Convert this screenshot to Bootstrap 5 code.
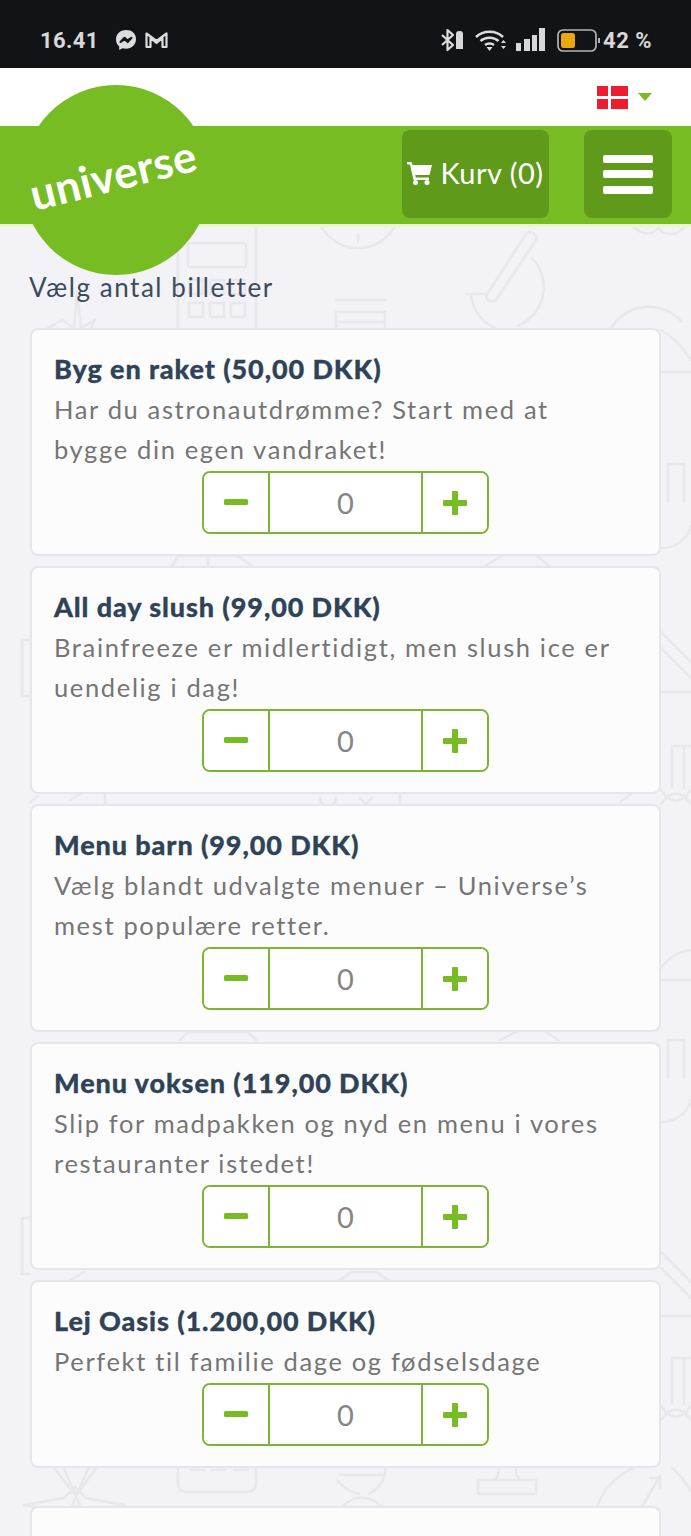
<!DOCTYPE html>
<html lang="da">
<head>
<meta charset="utf-8">
<title>Universe</title>
<link rel="stylesheet" href="https://cdn.jsdelivr.net/npm/bootstrap@5.3.0/dist/css/bootstrap.min.css">
<style>
html,body{margin:0;height:1536px;overflow:hidden}
body{background:#f2f2f7;font-family:Lato,"Noto Sans",sans-serif;color:#757575;position:relative}
.pattern{position:absolute;left:0;top:0;width:691px;height:1536px;z-index:0;fill:none;stroke:#e7e7ec;stroke-width:2.5;stroke-linejoin:round;stroke-linecap:round}
.statusbar{height:68px;background:#121316;color:#d8d8d8;font-family:Roboto,sans-serif;font-weight:700;font-size:22px;padding:12px 39px 0 40px;position:relative;z-index:1}
.clock{width:58px;margin-right:17px;letter-spacing:.4px}
.ic-wifi,.ic-signal{margin-left:8px}
.ic-batt{margin-left:12px}
.pct{margin-left:3px;letter-spacing:.5px}
.langbar{height:58px;background:#fff;padding-right:39px;position:relative;z-index:1}
.flag{width:31px;height:23px;margin-right:10px;display:block}
.caret-down{width:0;height:0;border-left:7.5px solid transparent;border-right:7.5px solid transparent;border-top:8px solid #78bc23}
.greenbar{height:98px;background:#78bc23;border-bottom:0;padding:4px 19px 6px 0;box-shadow:0 3px 0 #e9f8d2;position:relative;z-index:1}
.dark-btn{background:#5f9a1b;border:0;border-radius:8px;color:#fff;height:88px;padding:0}
.dark-btn:hover{background:#5f9a1b;color:#fff}
.cart-btn{width:147px;font-size:29px;margin-right:35px;letter-spacing:.5px;font-family:Lato,sans-serif;padding-bottom:2px}
.menu-btn{width:88px;gap:7.5px}
.menu-btn i{display:block;width:50px;height:8px;border-radius:2px;background:#fff}
.logo-disc{position:absolute;left:22px;top:85px;width:188px;height:190px;border-radius:50%;background:#78bc23;z-index:2}
.logo-word{position:absolute;left:1px;top:59px;width:180px;text-align:center;color:#fff;font-weight:700;font-size:44px;line-height:60px;letter-spacing:.5px;transform:rotate(-14deg)}
.page-main{position:relative;z-index:1;padding:46px 30px 0}
.lead-text{font-size:26px;line-height:34px;color:#3b4b5e;letter-spacing:1.55px;margin:0 0 24px -1px}
.ticket{border:2px solid #e6e6e8;border-radius:8px;background:#fcfcfd;margin-bottom:10px}
.ticket .card-body{padding:19px 22px 20px}
.ticket-title{font-size:27px;line-height:40px;font-weight:900;color:#2f4358;margin:0;letter-spacing:.9px;-webkit-text-stroke:.3px #2f4358}
.ticket-text{font-size:25.5px;line-height:40px;margin:0 0 2px;padding-right:12px;letter-spacing:1.65px;color:#757575}
.stepper{width:287px;height:63px;border:2px solid #7ab535;border-radius:8px;background:#fff;margin:0 auto;flex-wrap:nowrap;overflow:hidden}
.stepper>*{margin-left:0!important}
.stepper .step-btn{padding:0;border:0;border-radius:0;background:#fff;display:flex;align-items:center;justify-content:center;flex:none}
.stepper .form-control{border:0;border-left:2px solid #7ab535;border-right:2px solid #7ab535;border-radius:0;text-align:center;font-size:29px;color:#858585;padding:0;font-family:Lato,sans-serif;box-shadow:none}
.stepper .step-minus{width:64px}
.stepper .step-plus{width:64px}
.gap-last{margin-bottom:38px}
.ticket-empty{height:60px}
</style>
</head>
<body>
<svg class="pattern" viewBox="0 0 691 1536" aria-hidden="true">
  <!-- top row -->
  <rect x="178" y="214" width="78" height="140" rx="6"/>
  <rect x="188" y="243" width="58" height="24" rx="2"/>
  <path d="M189 280h14v14h-14zM210 280h14v14h-14zM231 280h14v14h-14zM189 303h14v14h-14zM210 303h14v14h-14zM231 303h14v14h-14z"/>
  <path d="M320 224a42 42 0 0 0 76 0M358 242v-8"/>
  <path d="M486 296l40-62a6 6 0 0 1 10 6l-40 60a6 6 0 0 1-10-4zM532 258a42 42 0 0 1-14 68M466 294h20M471 296a42 42 0 0 0 42 36"/>
  <path d="M336 312v18M385 312v18M336 312h49M336 322h49M336 300h49"/>
  <path d="M48 328l14-8 12 8 3-36 4 36 14-8-6 12"/>
  <path d="M610 330a44 44 0 0 1 72-8"/>
  <path d="M632 224c8 12 20 12 26 4 6 8 18 8 26 0"/>
  <!-- right edge -->
  <path d="M661 330c12 8 20 14 30 30M661 372h30"/>
  <path d="M668 502v-38h16v38M661 548c14 0 26-8 30-22"/>
  <path d="M661 632l30 30M661 648l30 30M661 692h30"/>
  <path d="M672 788v-42M684 788v-42M672 746h19M661 790c10 14 20 14 30 0M661 804c10-14 20-14 30 0"/>
  <path d="M661 968a44 44 0 0 1 30-18M661 980h30"/>
  <path d="M668 1078v-38h16v38M661 1122c14 0 26-8 30-22"/>
  <path d="M661 1252l30 30M661 1268l30 30M661 1316h30"/>
  <path d="M672 1404v-46M684 1404v-46M672 1358h19M661 1406c10 14 20 14 30 0M661 1420c10-14 20-14 30 0"/>
  <!-- left edge -->
  <path d="M30 640h-8v56h8M30 1218h-8v56h8"/>
  <!-- between cards -->
  <path d="M172 566l6-10h60l14 10M208 560v6M485 566l20-12h30l14 12"/>
  <path d="M30 802l8-6M70 800l14-8M105 804v-10M320 798a8 8 0 0 0 16 0M360 798l6 6 6-6M400 792v12M620 802l14-10"/>
  <path d="M180 1040l8-8h60l8 8M500 1040l20-10h24l14 10M70 1280l14-8M340 1280l12-8h24l12 8"/>
  <!-- bottom row -->
  <path d="M178 1460v24a8 8 0 0 0 8 8h62a8 8 0 0 0 8-8v-24M190 1470h14M212 1470h14M234 1470h14"/>
  <path d="M48 1460l28 36 26-36M24 1505l40-7 11-11 11 11 38 7-38 7-8 10-6-6-6 6-8-10zM60 1460l22 50M92 1460l-22 50"/>
  <path d="M337 1460a46 46 0 0 0 48 0M337 1480a40 30 0 0 0 22 14M385 1468a40 30 0 0 1-16 26M340 1510a26 26 0 0 1 44 0M340 1475h42"/>
  <path d="M478 1480v14h58v-14zM495 1480c4-4 4-8 4-12M520 1480c-4-4-4-8-4-12"/>
  <path d="M596 1510a66 66 0 0 1 38-42M672 1468a70 70 0 0 1 19 24M640 1510l20-34M650 1478h10v10"/>
</svg>

<header class="statusbar d-flex align-items-center">
  <span class="clock">16.41</span>
  <svg width="22" height="22" viewBox="0 0 22 22" class="me-2"><path fill="#dcdcdc" d="M11 1C5.2 1 1 5.100 1 10.500c0 2.900 1.200 5.300 3.200 7v3.500l3.300-1.800c1.100.3 2.300.5 3.500.5 5.800 0 10-4.100 10-9.700S16.800 1 11 1z"/><path fill="none" stroke="#121316" stroke-width="2" stroke-linejoin="round" d="M5.500 13l4-4.200 2.800 2.500 4.200-2.500-3.800 4.300-2.900-2.600z"/></svg>
  <svg width="23" height="18" viewBox="0 0 23 18"><path fill="none" stroke="#dcdcdc" stroke-width="2.200" stroke-linejoin="round" d="M1.500 16V2.500l10 7.500 10-7.500V16h-4V7L11.500 12 5.500 7v9z"/></svg>
  <span class="flex-grow-1"></span>
  <svg width="26" height="24" viewBox="0 0 26 24"><path fill="none" stroke="#dcdcdc" stroke-width="2.200" stroke-linejoin="round" d="M2 7l11 10-5.500 5V2L13 7 2 17"/><path fill="#d8d8d8" d="M16 6a3 3 0 0 1 3-3h1a3 3 0 0 1 3 3v15h-7z"/></svg>
  <svg width="33" height="24" viewBox="0 0 33 24" class="ic-wifi"><g fill="none" stroke="#dcdcdc" stroke-width="2.500"><path d="M2 9c7-7 20-7 27 0"/><path d="M6.500 13c5-4.500 13-4.500 18 0"/><path d="M11 17c2.500-2 6.500-2 9 0"/></g><path fill="#dcdcdc" d="M12.500 19h6l-3 4zM27 15l2.500-3 2.500 3zM27 18h5l-2.500 3z"/></svg>
  <svg width="30" height="24" viewBox="0 0 30 24" class="ic-signal"><path fill="#d8d8d8" d="M1 15h5v8H1zM9 11h6v12H9zM17 7h5v16h-5zM24 0h6v23h-6z"/></svg>
  <svg width="43" height="23" viewBox="0 0 43 23" class="ic-batt"><rect x="1" y="1" width="38" height="21" rx="5" fill="none" stroke="#b5b5b5" stroke-width="1.700"/><rect x="4" y="4" width="14" height="15" rx="2.500" fill="#eaa80f"/><path fill="#b5b5b5" d="M41 9h2v5h-2z"/></svg>
  <span class="pct">42 %</span>
</header>

<div class="langbar d-flex align-items-center justify-content-end">
  <svg class="flag" viewBox="0 0 31 23"><path fill="#ee1c2e" d="M0 0h31v23H0z"/><path fill="#fff" d="M11 0h3v23h-3zM0 10h31v3H0z"/></svg>
  <span class="caret-down"></span>
</div>

<nav class="greenbar d-flex justify-content-end">
  <button class="btn dark-btn cart-btn d-flex align-items-center justify-content-center" type="button">
    <svg width="25" height="24" viewBox="0 0 25 24" class="me-2 flex-shrink-0"><path fill="#fff" d="M0 1h4.500l1 3H25l-2.500 10H8.200l.5 2.500H22V19H6.500L3 3.500H0z"/><circle cx="8.500" cy="21.500" r="2.500" fill="#fff"/><circle cx="20" cy="21.500" r="2.500" fill="#fff"/></svg>
    Kurv (0)
  </button>
  <button class="btn dark-btn menu-btn d-flex flex-column align-items-center justify-content-center" type="button" aria-label="Menu"><i></i><i></i><i></i></button>
</nav>

<a class="logo-disc text-decoration-none" href="#"><span class="logo-word">universe</span></a>

<main class="page-main">
  <p class="lead-text">Vælg antal billetter</p>

  <section class="card ticket"><div class="card-body">
    <h2 class="ticket-title">Byg en raket (50,00 DKK)</h2>
    <p class="ticket-text">Har du astronautdrømme? Start med at bygge din egen vandraket!</p>
    <div class="input-group stepper">
      <button class="btn step-btn step-minus" type="button" aria-label="minus"><svg width="24" height="7" viewBox="0 0 24 7"><rect width="24" height="6" rx="1.500" fill="#78bc23"/></svg></button>
      <input class="form-control" value="0" aria-label="antal">
      <button class="btn step-btn step-plus" type="button" aria-label="plus"><svg width="24" height="24" viewBox="0 0 24 24"><path fill="#78bc23" d="M9 1a1 1 0 0 1 1-1h4a1 1 0 0 1 1 1v8h8a1 1 0 0 1 1 1v4a1 1 0 0 1-1 1h-8v8a1 1 0 0 1-1 1h-4a1 1 0 0 1-1-1v-8H1a1 1 0 0 1-1-1v-4a1 1 0 0 1 1-1h8z"/></svg></button>
    </div>
  </div></section>

  <section class="card ticket"><div class="card-body">
    <h2 class="ticket-title">All day slush (99,00 DKK)</h2>
    <p class="ticket-text">Brainfreeze er midlertidigt, men slush ice er uendelig i dag!</p>
    <div class="input-group stepper">
      <button class="btn step-btn step-minus" type="button" aria-label="minus"><svg width="24" height="7" viewBox="0 0 24 7"><rect width="24" height="6" rx="1.500" fill="#78bc23"/></svg></button>
      <input class="form-control" value="0" aria-label="antal">
      <button class="btn step-btn step-plus" type="button" aria-label="plus"><svg width="24" height="24" viewBox="0 0 24 24"><path fill="#78bc23" d="M9 1a1 1 0 0 1 1-1h4a1 1 0 0 1 1 1v8h8a1 1 0 0 1 1 1v4a1 1 0 0 1-1 1h-8v8a1 1 0 0 1-1 1h-4a1 1 0 0 1-1-1v-8H1a1 1 0 0 1-1-1v-4a1 1 0 0 1 1-1h8z"/></svg></button>
    </div>
  </div></section>

  <section class="card ticket"><div class="card-body">
    <h2 class="ticket-title">Menu barn (99,00 DKK)</h2>
    <p class="ticket-text">Vælg blandt udvalgte menuer – Universe’s mest populære retter.</p>
    <div class="input-group stepper">
      <button class="btn step-btn step-minus" type="button" aria-label="minus"><svg width="24" height="7" viewBox="0 0 24 7"><rect width="24" height="6" rx="1.500" fill="#78bc23"/></svg></button>
      <input class="form-control" value="0" aria-label="antal">
      <button class="btn step-btn step-plus" type="button" aria-label="plus"><svg width="24" height="24" viewBox="0 0 24 24"><path fill="#78bc23" d="M9 1a1 1 0 0 1 1-1h4a1 1 0 0 1 1 1v8h8a1 1 0 0 1 1 1v4a1 1 0 0 1-1 1h-8v8a1 1 0 0 1-1 1h-4a1 1 0 0 1-1-1v-8H1a1 1 0 0 1-1-1v-4a1 1 0 0 1 1-1h8z"/></svg></button>
    </div>
  </div></section>

  <section class="card ticket"><div class="card-body">
    <h2 class="ticket-title">Menu voksen (119,00 DKK)</h2>
    <p class="ticket-text">Slip for madpakken og nyd en menu i vores restauranter istedet!</p>
    <div class="input-group stepper">
      <button class="btn step-btn step-minus" type="button" aria-label="minus"><svg width="24" height="7" viewBox="0 0 24 7"><rect width="24" height="6" rx="1.500" fill="#78bc23"/></svg></button>
      <input class="form-control" value="0" aria-label="antal">
      <button class="btn step-btn step-plus" type="button" aria-label="plus"><svg width="24" height="24" viewBox="0 0 24 24"><path fill="#78bc23" d="M9 1a1 1 0 0 1 1-1h4a1 1 0 0 1 1 1v8h8a1 1 0 0 1 1 1v4a1 1 0 0 1-1 1h-8v8a1 1 0 0 1-1 1h-4a1 1 0 0 1-1-1v-8H1a1 1 0 0 1-1-1v-4a1 1 0 0 1 1-1h8z"/></svg></button>
    </div>
  </div></section>

  <section class="card ticket gap-last"><div class="card-body">
    <h2 class="ticket-title">Lej Oasis (1.200,00 DKK)</h2>
    <p class="ticket-text">Perfekt til familie dage og fødselsdage</p>
    <div class="input-group stepper">
      <button class="btn step-btn step-minus" type="button" aria-label="minus"><svg width="24" height="7" viewBox="0 0 24 7"><rect width="24" height="6" rx="1.500" fill="#78bc23"/></svg></button>
      <input class="form-control" value="0" aria-label="antal">
      <button class="btn step-btn step-plus" type="button" aria-label="plus"><svg width="24" height="24" viewBox="0 0 24 24"><path fill="#78bc23" d="M9 1a1 1 0 0 1 1-1h4a1 1 0 0 1 1 1v8h8a1 1 0 0 1 1 1v4a1 1 0 0 1-1 1h-8v8a1 1 0 0 1-1 1h-4a1 1 0 0 1-1-1v-8H1a1 1 0 0 1-1-1v-4a1 1 0 0 1 1-1h8z"/></svg></button>
    </div>
  </div></section>

  <section class="card ticket ticket-empty"></section>
</main>
<script src="https://cdn.jsdelivr.net/npm/bootstrap@5.3.0/dist/js/bootstrap.bundle.min.js"></script>
</body>
</html>
